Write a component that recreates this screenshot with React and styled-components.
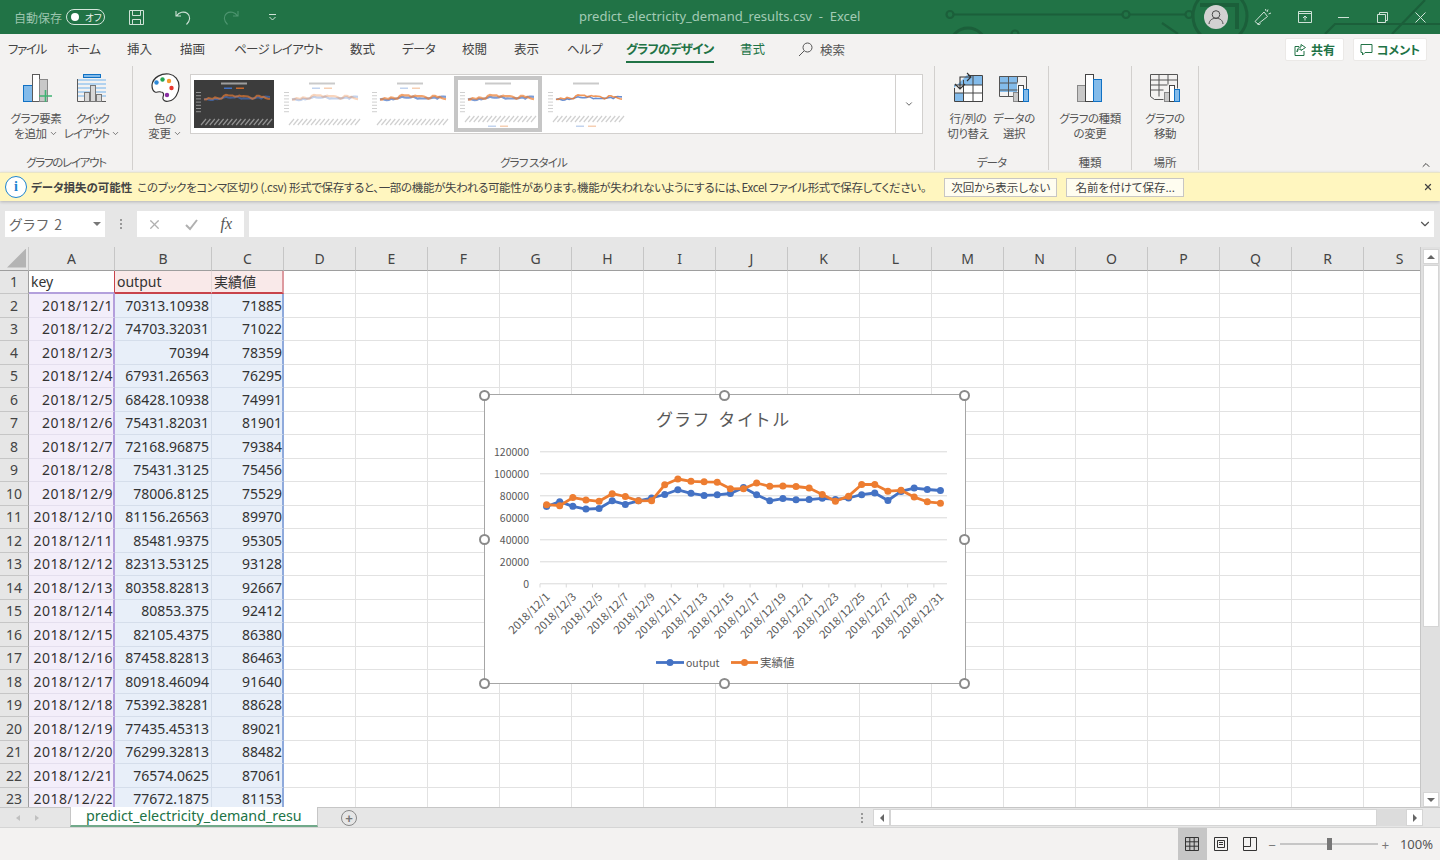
import React from 'react'
import styled, { createGlobalStyle, css } from 'styled-components'
import { ChevronDown, ChevronUp, X } from 'lucide-react'

const UI_FONT = '"Noto Sans CJK JP", "Noto Sans", sans-serif'
const CELL_FONT = '"Noto Sans", "Noto Sans CJK JP", sans-serif'

const rows = [
  ['2018/12/1', '70313.10938', '71885'],
  ['2018/12/2', '74703.32031', '71022'],
  ['2018/12/3', '70394', '78359'],
  ['2018/12/4', '67931.26563', '76295'],
  ['2018/12/5', '68428.10938', '74991'],
  ['2018/12/6', '75431.82031', '81901'],
  ['2018/12/7', '72168.96875', '79384'],
  ['2018/12/8', '75431.3125', '75456'],
  ['2018/12/9', '78006.8125', '75529'],
  ['2018/12/10', '81156.26563', '89970'],
  ['2018/12/11', '85481.9375', '95305'],
  ['2018/12/12', '82313.53125', '93128'],
  ['2018/12/13', '80358.82813', '92667'],
  ['2018/12/14', '80853.375', '92412'],
  ['2018/12/15', '82105.4375', '86380'],
  ['2018/12/16', '87458.82813', '86463'],
  ['2018/12/17', '80918.46094', '91640'],
  ['2018/12/18', '75392.38281', '88628'],
  ['2018/12/19', '77435.45313', '89021'],
  ['2018/12/20', '76299.32813', '88482'],
  ['2018/12/21', '76574.0625', '87061'],
  ['2018/12/22', '77672.1875', '81153'],
]

// the last days are below the fold, read off the chart
const outputSeries = [...rows.map((r) => Number(r[1])), 76700, 78000, 81000, 82500, 75700, 84000, 87000, 85700, 84800]
const actualSeries = [...rows.map((r) => Number(r[2])), 75000, 79700, 90300, 90300, 84200, 85000, 78800, 74500, 73300]

const columns = ['D', 'E', 'F', 'G', 'H', 'I', 'J', 'K', 'L', 'M', 'N', 'O', 'P', 'Q', 'R', 'S']

const tabs = [
  { label: 'ファイル', width: 59, squeeze: 1.3 },
  { label: 'ホーム', width: 60, squeeze: 1 },
  { label: '挿入', width: 53 },
  { label: '描画', width: 54 },
  { label: 'ページ レイアウト', width: 116, squeeze: 0.6 },
  { label: '数式', width: 52 },
  { label: 'データ', width: 60, squeeze: 0.6 },
  { label: '校閲', width: 52 },
  { label: '表示', width: 53 },
  { label: 'ヘルプ', width: 59 },
  { label: 'グラフのデザイン', width: 114, kind: 'active', squeeze: 0.75 },
  { label: '書式', width: 58, kind: 'context' },
]

const GlobalStyle = createGlobalStyle`
  html, body { margin: 0; padding: 0; overflow: hidden; background: #f3f2f1; }
  * { box-sizing: border-box; }
`

const Shell = styled.div`
  width: 1440px;
  height: 860px;
  display: flex;
  flex-direction: column;
  overflow: hidden;
  font-family: ${UI_FONT};
  font-feature-settings: "palt";
  color: #444;
`

/* title bar */
const TitleBar = styled.header`
  position: relative;
  height: 34px;
  flex: none;
  display: grid;
  grid-template-columns: 579px 1fr auto;
  align-items: center;
  background: #217346;
  color: #a3cbb5;
`
const Circuit = styled.svg`
  position: absolute;
  inset: 0;
  width: 1440px;
  height: 34px;
`
const QuickAccess = styled.div`
  position: relative;
  display: flex;
  align-items: center;
  padding-left: 14px;
`
const AutoSaveLabel = styled.span`
  font-size: 12px;
  color: #9cc5ae;
  width: 52px;
`
const Toggle = styled.span`
  width: 39px;
  height: 16px;
  border: 1px solid #d5e6dc;
  border-radius: 8px;
  display: flex;
  align-items: center;
  gap: 6px;
  padding-left: 4px;
  font-size: 9.5px;
  color: #eef5f1;
  &::before {
    content: "";
    width: 8px;
    height: 8px;
    border-radius: 50%;
    background: #fff;
  }
`
const QuickIcon = styled.span`
  display: flex;
  margin-left: ${(p) => p.$left}px;
`
const DocTitle = styled.div`
  position: relative;
  font-family: "Noto Sans", sans-serif;
  font-size: 13px;
  margin-top: -3px;
  color: #a3cbb5;
  white-space: pre;
`
const WindowTools = styled.div`
  position: relative;
  display: flex;
  align-items: center;
  padding-right: 14.5px;
`
const Avatar = styled.span`
  width: 24px;
  height: 24px;
  border-radius: 50%;
  background: #d2d2d2;
  display: flex;
  align-items: center;
  justify-content: center;
`
const WindowIcon = styled.span`
  display: flex;
  margin-left: ${(p) => p.$left}px;
`

/* tab row */
const TabRow = styled.nav`
  height: 30px;
  flex: none;
  display: flex;
  align-items: center;
  padding: 0 13px 0 8px;
  background: #f3f2f1;
`
const Tab = styled.span`
  flex: none;
  width: ${(p) => p.$width}px;
  margin-top: -1px;
  font-size: 12.5px;
  letter-spacing: ${(p) => -(p.$squeeze || 0)}px;
  color: #444;
  ${(p) =>
    p.$kind === 'context' &&
    css`
      color: #217346;
    `}
  ${(p) =>
    p.$kind === 'active' &&
    css`
      color: #217346;
      font-weight: 700;
      position: relative;
      &::after {
        content: "";
        position: absolute;
        left: 0;
        bottom: -5px;
        width: 88px;
        height: 2.5px;
        background: #217346;
      }
    `}
`
const SearchBox = styled.span`
  display: flex;
  align-items: center;
  gap: 7px;
  font-size: 12.5px;
  color: #555;
`
const TabActions = styled.div`
  margin-left: auto;
  display: flex;
  gap: 9px;
`
const ActionButton = styled.span`
  height: 23px;
  width: ${(p) => p.$width}px;
  background: #fff;
  border: 1px solid #ebe9e7;
  border-radius: 2px;
  display: flex;
  align-items: center;
  justify-content: center;
  gap: 4px;
  font-size: 12px;
  font-weight: 700;
  color: #217346;
`

/* ribbon */
const Ribbon = styled.section`
  height: 108px;
  flex: none;
  display: flex;
  background: #f3f2f1;
`
const Group = styled.div`
  width: ${(p) => p.$width}px;
  height: 104px;
  margin-top: 2px;
  flex: none;
  display: flex;
  flex-direction: column;
  border-right: 1px solid #d2d0ce;
`
const GroupBody = styled.div`
  height: 88px;
  display: flex;
  padding: 6px 0 0 ${(p) => p.$pad}px;
`
const GroupLabel = styled.div`
  text-align: center;
  font-size: 11.5px;
  line-height: 16px;
  margin-top: 2px;
  letter-spacing: ${(p) => -(p.$squeeze || 0)}px;
  color: #555;
`
const RibbonButton = styled.div`
  width: ${(p) => p.$width}px;
  flex: none;
  display: flex;
  flex-direction: column;
  align-items: center;
  font-size: 11.5px;
  line-height: 15px;
  letter-spacing: -0.4px;
  color: #555;
  text-align: center;
  white-space: nowrap;
  svg.ribbon-icon {
    display: block;
    margin-bottom: 6.5px;
  }
`
const Squeezed = styled.span`
  letter-spacing: ${(p) => -p.$by}px;
`
const Gallery = styled.div`
  width: 733px;
  height: 60px;
  margin-top: 2px;
  flex: none;
  display: flex;
  align-items: center;
  gap: 8px;
  padding-left: 3px;
  background: #fff;
  border: 1px solid #d2d0ce;
`
const Thumb = styled.svg`
  width: 80px;
  height: 48px;
  flex: none;
  filter: blur(0.5px);
  outline: ${(p) => (p.$selected ? '4px solid #c6c6c6' : 'none')};
`
const GalleryMore = styled.span`
  margin-left: auto;
  width: 27px;
  height: 100%;
  display: flex;
  align-items: center;
  justify-content: center;
  border-left: 1px solid #d2d0ce;
  color: #444;
`
const Collapse = styled.span`
  margin: auto 8px 1px auto;
  display: flex;
  color: #444;
`

/* message bar */
const MessageBar = styled.div`
  position: relative;
  z-index: 1;
  height: 29px;
  flex: none;
  display: flex;
  align-items: center;
  background: #fff6bf;
  border-top: 1px solid #e8e4c8;
  box-shadow: 0 1px 3px rgba(0, 0, 0, 0.22);
  padding: 0 7px 0 5px;
  font-size: 11.5px;
  color: #444;
  white-space: nowrap;
`
const InfoIcon = styled.span`
  width: 22px;
  height: 22px;
  flex: none;
  border: 1.5px solid #1d84d0;
  border-radius: 50%;
  background: #fff;
  color: #1d84d0;
  display: flex;
  align-items: center;
  justify-content: center;
  font: 700 14px "Liberation Serif", serif;
  margin-right: 4px;
`
const MessageTitle = styled.b`
  font-weight: 700;
  color: #444;
  margin-right: 5px;
`
const MessageText = styled.span`
  letter-spacing: -0.34px;
`
const MessageButton = styled.span`
  height: 19px;
  width: ${(p) => p.$width}px;
  margin-left: ${(p) => p.$left}px;
  flex: none;
  display: flex;
  align-items: center;
  justify-content: center;
  background: #fffdf0;
  border: 1px solid #c8c6c4;
  color: #444;
`
const MessageClose = styled.span`
  margin-left: auto;
  display: flex;
  color: #444;
`

/* formula bar */
const FormulaArea = styled.div`
  height: 46px;
  flex: none;
  display: flex;
  align-items: center;
  padding: 0 6px 0 5px;
  background: #e6e6e6;
`
const NameBox = styled.div`
  width: 100px;
  height: 26px;
  background: #fff;
  display: flex;
  align-items: center;
  justify-content: space-between;
  padding: 0 4px;
  font-size: 14px;
  color: #666;
  letter-spacing: 1.4px;
  &::after {
    content: "";
    border-left: 4px solid transparent;
    border-right: 4px solid transparent;
    border-top: 4px solid #777;
  }
`
const Grip = styled.div`
  width: 32px;
  display: flex;
  flex-direction: column;
  align-items: center;
  gap: 2px;
  i {
    width: 2px;
    height: 2px;
    background: #999;
  }
`
const FormulaButtons = styled.div`
  width: 107px;
  height: 26px;
  background: #fff;
  display: flex;
  align-items: center;
  justify-content: space-between;
  padding: 0 12px 0 10px;
  color: #b0b0b0;
`
const FxLabel = styled.span`
  font: italic 400 16px "Liberation Serif", serif;
  color: #555;
`
const FormulaInput = styled.div`
  flex: 1;
  height: 26px;
  margin-left: 5px;
  background: #fff;
  display: flex;
  align-items: center;
  justify-content: flex-end;
  padding-right: 2px;
  color: #555;
`

/* worksheet */
const Workspace = styled.div`
  height: 560px;
  flex: none;
  display: flex;
  background: #e6e6e6;
`
const SheetPane = styled.div`
  position: relative;
  width: 1421px;
  flex: none;
  overflow: hidden;
  background: #fff;
  border-right: 1px solid #c6c6c6;
`
const SheetGrid = styled.div`
  display: grid;
  grid-template-columns: 29px 86px 97px 72px repeat(16, 72px);
  grid-auto-rows: 23.5px;
  font-family: ${CELL_FONT};
`
const CornerCell = styled.div`
  background: #e6e6e6;
  border-right: 1px solid #c6c6c6;
  border-bottom: 1px solid #9e9e9e;
  position: relative;
  &::after {
    content: "";
    position: absolute;
    right: 2px;
    bottom: 2px;
    width: 19px;
    height: 19px;
    background: #b4b4b4;
    clip-path: polygon(100% 0, 100% 100%, 0 100%);
  }
`
const ColumnHead = styled.div`
  background: #e6e6e6;
  border-right: 1px solid #c6c6c6;
  border-bottom: 1px solid #9e9e9e;
  display: flex;
  align-items: center;
  justify-content: center;
  font-size: 14px;
  color: #444;
`
const RowHead = styled.div`
  background: #e6e6e6;
  border-right: 1px solid #9e9e9e;
  border-bottom: 1px solid #c6c6c6;
  display: flex;
  align-items: center;
  justify-content: center;
  font-size: 14px;
  color: #444;
`
const cellTones = {
  keyHead: css`
    border-right: 1px solid #c8434b;
    border-bottom: 2px solid #b3a0dc;
  `,
  outHead: css`
    background: #f9e9e9;
    border-bottom: 2px solid #c8434b;
    border-right: 1px solid #e6d8d8;
    justify-content: flex-start;
  `,
  valHead: css`
    background: #f9e9e9;
    border-bottom: 2px solid #c8434b;
    border-right: 2px solid #dd9a9f;
    justify-content: flex-start;
  `,
  key: css`
    background: #f3eefa;
    border-right: 2px solid #b49fdc;
    border-bottom: 1px solid #e4dfee;
    justify-content: flex-end;
    padding-right: 0;
    letter-spacing: 0.5px;
  `,
  output: css`
    background: #e8eff9;
    border-right: 1px solid #d5deeb;
    border-bottom: 1px solid #d5deeb;
    justify-content: flex-end;
  `,
  actual: css`
    background: #e8eff9;
    border-right: 2px solid #8faadc;
    border-bottom: 1px solid #d5deeb;
    justify-content: flex-end;
    padding-right: 0;
  `,
}
const Cell = styled.div`
  display: flex;
  align-items: center;
  padding: 0 2px;
  font-size: 14px;
  color: #333;
  white-space: nowrap;
  border-right: 1px solid #e2e2e2;
  border-bottom: 1px solid #e2e2e2;
  ${(p) => cellTones[p.$tone]}
`

/* chart lying on the sheet */
const ChartFrame = styled.div`
  position: absolute;
  left: 483.5px;
  top: 147px;
  width: 482px;
  height: 290px;
  background: #fff;
  border: 1.5px solid #a6a6a6;
`
const ChartDrawing = styled.svg`
  display: block;
  width: 479px;
  height: 287px;
  font-family: ${UI_FONT};
`
const Handle = styled.span`
  position: absolute;
  left: ${(p) => p.$x}%;
  top: ${(p) => p.$y}%;
  width: 11px;
  height: 11px;
  margin: -5.5px 0 0 -5.5px;
  border-radius: 50%;
  background: #fff;
  border: 2px solid #8a8a8a;
`

/* scrollbars */
const VerticalBar = styled.div`
  flex: 1;
  display: flex;
  flex-direction: column;
  padding: 2px 1px 0 2px;
  background: #e0e0e0;
`
const ScrollButton = styled.span`
  height: ${(p) => p.$size || 15}px;
  width: ${(p) => p.$wide || 'auto'};
  flex: none;
  background: #fff;
  border: 1px solid #d5d5d5;
  display: flex;
  align-items: center;
  justify-content: center;
  &::after {
    content: "";
    ${(p) =>
      p.$dir === 'up' &&
      css`
        border-left: 4px solid transparent;
        border-right: 4px solid transparent;
        border-bottom: 4px solid #666;
      `}
    ${(p) =>
      p.$dir === 'down' &&
      css`
        border-left: 4px solid transparent;
        border-right: 4px solid transparent;
        border-top: 4px solid #666;
      `}
    ${(p) =>
      p.$dir === 'left' &&
      css`
        border-top: 4px solid transparent;
        border-bottom: 4px solid transparent;
        border-right: 4px solid #666;
      `}
    ${(p) =>
      p.$dir === 'right' &&
      css`
        border-top: 4px solid transparent;
        border-bottom: 4px solid transparent;
        border-left: 4px solid #666;
      `}
  }
`
const VerticalThumb = styled.span`
  height: 362px;
  margin-top: 1px;
  background: #fff;
  border: 1px solid #d5d5d5;
  flex: none;
`
const BarSpacer = styled.span`
  flex: 1;
`

/* sheet tabs */
const SheetTabs = styled.div`
  height: 21px;
  flex: none;
  display: flex;
  background: #e6e6e6;
  border-top: 1px solid #c6c6c6;
  border-bottom: 1px solid #d5d5d5;
`
const TabNav = styled.div`
  width: 70px;
  flex: none;
  display: flex;
  align-items: center;
  gap: 15px;
  padding-left: 16px;
  i {
    border-top: 3.5px solid transparent;
    border-bottom: 3.5px solid transparent;
  }
  i:first-child {
    border-right: 4px solid #c0c0c0;
  }
  i:last-child {
    border-left: 4px solid #c0c0c0;
  }
`
const SheetTab = styled.div`
  width: 248px;
  height: 20px;
  flex: none;
  margin-top: -1px;
  padding: 0 0 1px 15px;
  display: flex;
  align-items: center;
  background: #fff;
  color: #217346;
  font-family: "Noto Sans", sans-serif;
  font-size: 14.3px;
  border-left: 1px solid #c6c6c6;
  border-right: 1px solid #c6c6c6;
  border-bottom: 2px solid #71a98a;
  white-space: nowrap;
  overflow: hidden;
`
const AddSheet = styled.span`
  width: 16px;
  height: 16px;
  flex: none;
  margin: 2px 0 0 23px;
  border: 1.5px solid #888;
  border-radius: 50%;
  display: flex;
  align-items: center;
  justify-content: center;
  color: #777;
  font: 700 13px/1 "Liberation Sans", sans-serif;
`
const SplitGrip = styled(Grip)`
  width: 10px;
  margin-left: 500px;
  justify-content: center;
`
const HorizontalBar = styled.div`
  margin-left: 6px;
  width: 550px;
  flex: none;
  display: flex;
  padding-top: 1px;
`
const HorizontalThumb = styled.span`
  width: 487px;
  height: 17px;
  flex: none;
  background: #fff;
  border: 1px solid #d5d5d5;
`
const HorizontalTrack = styled.span`
  width: 29px;
  height: 17px;
  flex: none;
  background: #dcdcdc;
`

/* status bar */
const StatusBar = styled.footer`
  flex: 1;
  display: flex;
  justify-content: flex-end;
  align-items: stretch;
  background: #f3f2f1;
  padding-right: 7px;
`
const ViewButton = styled.span`
  width: 29px;
  display: flex;
  align-items: center;
  justify-content: center;
  background: ${(p) => (p.$on ? '#c6c6c6' : 'transparent')};
`
const ZoomSlider = styled.div`
  display: flex;
  align-items: center;
  margin-left: 3.5px;
  color: #777;
  font-size: 13px;
`
const SliderTrack = styled.span`
  position: relative;
  width: 98px;
  height: 2px;
  margin: 0 4px;
  background: #c6c6c6;
  &::after {
    content: "";
    position: absolute;
    left: 47px;
    top: -5px;
    width: 5px;
    height: 12px;
    background: #777;
  }
`
const ZoomValue = styled.span`
  margin: auto 0 auto 11px;
  font-family: "Noto Sans", sans-serif;
  font-size: 13px;
  color: #555;
`

/* drawings */
const BLUE = '#83bbea'
const BLUE_LINE = '#1071c4'
const GRAY_LINE = '#5a5a5a'

function AddElementIcon() {
  return (
    <svg className="ribbon-icon" width="36" height="32" viewBox="0 0 36 32">
      <rect x="5.5" y="13.5" width="9" height="16" fill={BLUE} stroke={BLUE_LINE} />
      <rect x="14.5" y="2.5" width="7" height="27" fill="#fff" stroke={GRAY_LINE} />
      <rect x="21.5" y="7.5" width="8" height="22" fill="#c8c8c8" stroke="#888" />
      <path d="M27.5 18v12M21 24h13" stroke="#3fb373" strokeWidth="1.6" fill="none" />
    </svg>
  )
}

function QuickLayoutIcon() {
  return (
    <svg className="ribbon-icon" width="34" height="32" viewBox="0 0 34 32">
      <path d="M3 8h28M3 12h28M3 16h28M3 20h28M3 24h28" stroke="#9cc8ee" strokeWidth="1.6" />
      <rect x="8.5" y="2.5" width="17" height="3" fill={BLUE} stroke={BLUE_LINE} />
      <path d="M2.5 7v22.5H31" stroke={GRAY_LINE} fill="none" />
      <rect x="9.5" y="20.5" width="5" height="9" fill="#d8d8d8" stroke="#777" />
      <rect x="15.5" y="13.5" width="5" height="16" fill="#d8d8d8" stroke="#777" />
      <rect x="21.5" y="22.5" width="5" height="7" fill="#d8d8d8" stroke="#777" />
    </svg>
  )
}

function PaletteIcon() {
  return (
    <svg className="ribbon-icon" width="32" height="32" viewBox="0 0 32 32">
      <path
        d="M3 13C4 5 13 1 20 2c6 1 10 6 10 12 0 7-4 14-10 15-4 1-7-1-6-4 1-2 1-5-2-5-3-1-4 1-6 0-2-1-3-4-3-7z"
        fill="#fff"
        stroke="#333"
        strokeWidth="1.2"
      />
      <circle cx="7.5" cy="10.5" r="2.2" fill="#2d89d8" />
      <circle cx="13.5" cy="7.5" r="2.2" fill="#25a552" />
      <circle cx="20" cy="9" r="2.2" fill="#f59a2e" />
      <circle cx="22.5" cy="16" r="2.2" fill="#e8352e" />
      <circle cx="18" cy="23" r="2.2" fill="#8a2fa3" />
    </svg>
  )
}

function SwitchRowColIcon() {
  return (
    <svg className="ribbon-icon" width="32" height="32" viewBox="0 0 32 32">
      <path d="M2 29V16L15 3h15v10H2z" fill={BLUE} />
      <path d="M11.5 13h19v16h-19z" fill="#fff" />
      <path d="M2 21h9.5V29H2z" fill={BLUE} />
      <path d="M2.5 16v13.5h28V3.5H16M2.5 21h28M2.5 13h28M11.5 8v21.5M21 3.5v26" stroke="#444" fill="none" />
      <path d="M3 12l5 5 5-5M8 16V5h11M15 1l4 4-4 4" stroke="#333" fill="none" strokeWidth="1.1" />
    </svg>
  )
}

function SelectDataIcon() {
  return (
    <svg className="ribbon-icon" width="32" height="32" viewBox="0 0 32 32">
      <rect x="1" y="4" width="18" height="16" fill={BLUE} />
      <path d="M1.5 4.5h27v14M1.5 4.5v20h14M1.5 11h18M1.5 18h18M10.5 4.5v20M19.5 4.5v6" stroke="#555" fill="none" />
      <rect x="15.5" y="20.5" width="6" height="9" fill="#c8c8c8" stroke="#888" />
      <rect x="20.5" y="13.5" width="5" height="16" fill="#fff" stroke="#444" />
      <rect x="25.5" y="17.5" width="5" height="12" fill={BLUE} stroke={BLUE_LINE} />
    </svg>
  )
}

function ChartTypeIcon() {
  return (
    <svg className="ribbon-icon" width="28" height="32" viewBox="0 0 28 32">
      <rect x="1.5" y="13.5" width="8" height="16" fill="#c8c8c8" stroke="#888" />
      <rect x="9.5" y="2.5" width="8" height="27" fill="#fff" stroke="#444" />
      <rect x="17.5" y="7.5" width="8" height="22" fill={BLUE} stroke={BLUE_LINE} />
    </svg>
  )
}

function MoveChartIcon() {
  return (
    <svg className="ribbon-icon" width="32" height="32" viewBox="0 0 32 32">
      <path d="M1.5 2.5h27v14M1.5 2.5v22l4 3h9M1.5 8h27M1.5 13h17M1.5 18h13M10 2.5v22M19 2.5v10" stroke="#555" fill="none" />
      <rect x="15.5" y="20.5" width="5" height="9" fill="#c8c8c8" stroke="#888" />
      <rect x="20.5" y="13.5" width="5" height="16" fill="#fff" stroke="#444" />
      <rect x="25.5" y="17.5" width="5" height="12" fill={BLUE} stroke={BLUE_LINE} />
    </svg>
  )
}

function MiniChart({ variant, selected, legendLow }) {
  const dark = variant === 'dark'
  const widths = { dark: 2, pale: 2.2, bold: 2.2, plain: 1.6 }
  const opacities = { dark: 0.65, pale: 0.32, bold: 0.7, plain: 0.8 }
  const toPath = (series) =>
    series
      .map((v, i) => `${i === 0 ? 'M' : 'L'}${(10 + i * 2.2).toFixed(1)} ${(33 - v * 0.00019).toFixed(1)}`)
      .join(' ')
  const ink = dark ? '#a8a8a8' : '#c4c4c4'
  const legendY = legendLow ? 45.5 : 7.5
  return (
    <Thumb viewBox="0 0 80 48" $selected={selected}>
      <rect width="80" height="48" fill={dark ? '#3c3c3c' : '#fff'} />
      <rect x="27" y="2.5" width="26" height="2" fill={ink} opacity="0.9" />
      <rect x="30" y={legendY} width="8" height="1.5" fill={dark ? '#4472c4' : '#c2d3ee'} />
      <rect x="42" y={legendY} width="8" height="1.5" fill={dark ? '#c8692c' : '#f6cfb3'} />
      {[0, 1, 2, 3, 4, 5, 6].map((n) => (
        <rect key={n} x="2" y={12 + n * 3.2} width="5" height="1" fill={ink} opacity="0.8" />
      ))}
      <path d={toPath(outputSeries)} stroke="#4472c4" strokeWidth={widths[variant]} fill="none" opacity={opacities[variant]} />
      <path d={toPath(actualSeries)} stroke="#ed7d31" strokeWidth={widths[variant]} fill="none" opacity={opacities[variant]} />
      {outputSeries.map((_, i) =>
        i % 2 === 0 ? (
          <path key={i} d={`M${7 + i * 2.2} ${legendLow ? 42 : 45}l5-6`} stroke={ink} strokeWidth="1.2" opacity="0.8" />
        ) : null
      )}
    </Thumb>
  )
}

function seriesY(value) {
  return 584.3 - (value / 120000) * 132
}
function seriesX(index) {
  return 540 + (407 / 31) * (index + 0.5)
}

function Series({ values, color }) {
  const line = values.map((v, i) => `${seriesX(i).toFixed(1)},${seriesY(v).toFixed(1)}`).join(' ')
  return (
    <g>
      <polyline points={line} fill="none" stroke={color} strokeWidth="2.8" strokeLinejoin="round" />
      {values.map((v, i) => (
        <circle key={i} cx={seriesX(i)} cy={seriesY(v)} r="3.5" fill={color} />
      ))}
    </g>
  )
}

function ChartSvg() {
  const ticks = [0, 20000, 40000, 60000, 80000, 100000, 120000]
  return (
    <ChartDrawing viewBox="485 395.5 479 287">
      <text x="724.5" y="426" textAnchor="middle" fontSize="17" letterSpacing="3.7" fill="#595959">
        グラフ タイトル
      </text>
      {ticks.map((t) => (
        <g key={t}>
          <line x1="540" x2="947" y1={seriesY(t)} y2={seriesY(t)} stroke="#d9d9d9" strokeWidth="1" />
          <text x="529" y={seriesY(t) + 3.8} textAnchor="end" fontSize="10.5" fill="#595959">
            {t}
          </text>
        </g>
      ))}
      {Array.from({ length: 16 }).map((_, i) => {
        const x = 540 + (407 / 31) * 2 * i
        return <line key={i} x1={x} x2={x} y1="584.3" y2="588" stroke="#d9d9d9" />
      })}
      {Array.from({ length: 16 }).map((_, i) => {
        const x = seriesX(i * 2) + 4
        return (
          <text
            key={i}
            x={x}
            y="598"
            textAnchor="end"
            fontSize="11.3"
            fill="#595959"
            transform={`rotate(-45 ${x} 598)`}
          >
            {`2018/12/${i * 2 + 1}`}
          </text>
        )
      })}
      <Series values={outputSeries} color="#4472c4" />
      <Series values={actualSeries} color="#ed7d31" />
      <line x1="656" x2="684" y1="663" y2="663" stroke="#4472c4" strokeWidth="2.8" />
      <circle cx="670" cy="663" r="3.5" fill="#4472c4" />
      <text x="686" y="667" fontSize="10.5" fill="#595959">
        output
      </text>
      <line x1="731" x2="758" y1="663" y2="663" stroke="#ed7d31" strokeWidth="2.8" />
      <circle cx="744.5" cy="663" r="3.5" fill="#ed7d31" />
      <text x="760" y="667" fontSize="11.5" fill="#595959">
        実績値
      </text>
    </ChartDrawing>
  )
}

const handles = [
  [0, 0],
  [50, 0],
  [100, 0],
  [0, 50],
  [100, 50],
  [0, 100],
  [50, 100],
  [100, 100],
]

function BlankCells() {
  return columns.map((c) => <Cell key={c} />)
}

function Worksheet() {
  return (
    <SheetGrid>
      <CornerCell />
      {['A', 'B', 'C', ...columns].map((c) => (
        <ColumnHead key={c}>{c}</ColumnHead>
      ))}
      <RowHead>1</RowHead>
      <Cell $tone="keyHead">key</Cell>
      <Cell $tone="outHead">output</Cell>
      <Cell $tone="valHead">実績値</Cell>
      <BlankCells />
      {rows.map((r, i) => (
        <React.Fragment key={r[0]}>
          <RowHead>{i + 2}</RowHead>
          <Cell $tone="key">{r[0]}</Cell>
          <Cell $tone="output">{r[1]}</Cell>
          <Cell $tone="actual">{r[2]}</Cell>
          <BlankCells />
        </React.Fragment>
      ))}
    </SheetGrid>
  )
}

function App() {
  return (
    <Shell>
      <GlobalStyle />
      <TitleBar>
        <Circuit viewBox="0 0 1440 34" fill="none" stroke="#1b5f3a" strokeWidth="2.2">
          <path d="M954 14.5H1122M1130 14.5H1185" />
          <circle cx="950" cy="14.5" r="3.5" />
          <circle cx="1126" cy="14.5" r="3.5" />
          <circle cx="1189" cy="14.5" r="3.5" />
          <circle cx="1220" cy="16" r="27" strokeWidth="3" />
          <path d="M1200 5h37v24" strokeWidth="4" />
          <circle cx="968" cy="46" r="18" strokeWidth="3" />
          <circle cx="1015" cy="34" r="3.5" />
          <path d="M1162 23l16 11M1325 34l10-10H1440M1392 34l33-34" />
        </Circuit>
        <QuickAccess>
          <AutoSaveLabel>自動保存</AutoSaveLabel>
          <Toggle>オフ</Toggle>
          <QuickIcon $left={23}>
            <svg width="17" height="17" viewBox="0 0 17 17" fill="none" stroke="#cfe2d7" strokeWidth="1">
              <path d="M1.5 1.5h14v14h-14zM4.5 1.5v5h8v-5M4.5 15.5v-5h8v5" />
            </svg>
          </QuickIcon>
          <QuickIcon $left={30}>
            <svg width="17" height="17" viewBox="0 0 17 17" fill="none" stroke="#cfe2d7" strokeWidth="1.1">
              <path d="M1 2v5h5M1.5 7C4 3 9 2 12.5 4.5c3 2.5 3 7-1 11" />
            </svg>
          </QuickIcon>
          <QuickIcon $left={30}>
            <svg width="17" height="17" viewBox="0 0 17 17" fill="none" stroke="#4e9570" strokeWidth="1.1">
              <path d="M16 2v5h-5M15.5 7C13 3 8 2 4.5 4.5c-3 2.5-3 7 1 11" />
            </svg>
          </QuickIcon>
          <QuickIcon $left={29}>
            <svg width="9" height="9" viewBox="0 0 9 9" fill="none" stroke="#cfe2d7" strokeWidth="1">
              <path d="M1 1.5h7M1.5 4l3 3 3-3" />
            </svg>
          </QuickIcon>
        </QuickAccess>
        <DocTitle>predict_electricity_demand_results.csv  -  Excel</DocTitle>
        <WindowTools>
          <Avatar>
            <svg width="16" height="16" viewBox="0 0 16 16" fill="none" stroke="#4a4a4a" strokeWidth="1">
              <circle cx="8" cy="5.5" r="3.8" />
              <path d="M1 15c.5-4 3-5.7 7-5.7s6.5 1.7 7 5.7" />
            </svg>
          </Avatar>
          <WindowIcon $left={26}>
            <svg width="18" height="18" viewBox="0 0 18 18" fill="none" stroke="#cfe2d7" strokeWidth="1">
              <path d="M1 13.5L10 4l3.5 4.5L4 16zM3 15.5c1 1.5 3 1.5 3.5 0M14 1.5l-1 2.5M17 5l-2.5 1M11.5 1l.5 2" />
            </svg>
          </WindowIcon>
          <WindowIcon $left={26}>
            <svg width="14" height="12" viewBox="0 0 14 12" fill="none" stroke="#cfe2d7" strokeWidth="1">
              <path d="M.5 .5h13v11H.5zM.5 2.5h13M7 9.5V5M5 7l2-2 2 2" />
            </svg>
          </WindowIcon>
          <WindowIcon $left={25.5}>
            <svg width="11" height="11" viewBox="0 0 11 11" fill="none" stroke="#cfe2d7" strokeWidth="1">
              <path d="M0 5.5h11" />
            </svg>
          </WindowIcon>
          <WindowIcon $left={28}>
            <svg width="11" height="11" viewBox="0 0 11 11" fill="none" stroke="#cfe2d7" strokeWidth="1">
              <path d="M.5 2.5h8v8h-8zM2.5 2.5v-2h8v8h-2" />
            </svg>
          </WindowIcon>
          <WindowIcon $left={27}>
            <svg width="11" height="11" viewBox="0 0 11 11" fill="none" stroke="#cfe2d7" strokeWidth="1">
              <path d="M.5 .5l10 10M10.5 .5l-10 10" />
            </svg>
          </WindowIcon>
        </WindowTools>
      </TitleBar>

      <TabRow>
        {tabs.map((t) => (
          <Tab key={t.label} $width={t.width} $kind={t.kind} $squeeze={t.squeeze}>
            {t.label}
          </Tab>
        ))}
        <SearchBox>
          <svg width="15" height="15" viewBox="0 0 15 15" fill="none" stroke="#555" strokeWidth="1">
            <circle cx="9.5" cy="5.5" r="4.5" />
            <path d="M6 9l-5 5" />
          </svg>
          検索
        </SearchBox>
        <TabActions>
          <ActionButton $width={59}>
            <svg width="13" height="13" viewBox="0 0 13 13" fill="none" stroke="#217346" strokeWidth="1">
              <path d="M5 3.5H1v9h9V8M7 1.5l4.5 3-4.5 3V6c-2 0-3.5 1-4 3 0-3 1.5-5 4-5z" />
            </svg>
            共有
          </ActionButton>
          <ActionButton $width={74}>
            <svg width="13" height="13" viewBox="0 0 13 13" fill="none" stroke="#217346" strokeWidth="1">
              <path d="M1 1.5h11v8H5l-2.5 2.5V9.5H1z" />
            </svg>
            コメント
          </ActionButton>
        </TabActions>
      </TabRow>

      <Ribbon>
        <Group $width={133}>
          <GroupBody $pad={8}>
            <RibbonButton $width={56}>
              <AddElementIcon />
              <span>グラフ要素</span>
              <span>
                を追加 <ChevronDown size={9} />
              </span>
            </RibbonButton>
            <RibbonButton $width={56}>
              <QuickLayoutIcon />
              <Squeezed $by={2}>クイック</Squeezed>
              <span>
                <Squeezed $by={1}>レイアウト</Squeezed> <ChevronDown size={9} />
              </span>
            </RibbonButton>
          </GroupBody>
          <GroupLabel $squeeze={1.3}>グラフのレイアウト</GroupLabel>
        </Group>
        <Group $width={802}>
          <GroupBody $pad={7}>
            <RibbonButton $width={50}>
              <PaletteIcon />
              <span>色の</span>
              <span>
                変更 <ChevronDown size={9} />
              </span>
            </RibbonButton>
            <Gallery>
              <MiniChart variant="dark" />
              <MiniChart variant="pale" />
              <MiniChart variant="bold" />
              <MiniChart variant="bold" selected legendLow />
              <MiniChart variant="plain" legendLow />
              <GalleryMore>
                <ChevronDown size={10} strokeWidth={2} />
              </GalleryMore>
            </Gallery>
          </GroupBody>
          <GroupLabel $squeeze={0.9}>グラフ スタイル</GroupLabel>
        </Group>
        <Group $width={114}>
          <GroupBody $pad={10}>
            <RibbonButton $width={46}>
              <SwitchRowColIcon />
              <span>行/列の</span>
              <span>切り替え</span>
            </RibbonButton>
            <RibbonButton $width={46}>
              <SelectDataIcon />
              <span>データの</span>
              <span>選択</span>
            </RibbonButton>
          </GroupBody>
          <GroupLabel $squeeze={1}>データ</GroupLabel>
        </Group>
        <Group $width={83}>
          <GroupBody $pad={0}>
            <RibbonButton $width={82}>
              <ChartTypeIcon />
              <span>グラフの種類</span>
              <span>の変更</span>
            </RibbonButton>
          </GroupBody>
          <GroupLabel>種類</GroupLabel>
        </Group>
        <Group $width={67}>
          <GroupBody $pad={0}>
            <RibbonButton $width={66}>
              <MoveChartIcon />
              <span>グラフの</span>
              <span>移動</span>
            </RibbonButton>
          </GroupBody>
          <GroupLabel>場所</GroupLabel>
        </Group>
        <Collapse>
          <ChevronUp size={12} />
        </Collapse>
      </Ribbon>

      <MessageBar>
        <InfoIcon>i</InfoIcon>
        <MessageTitle>データ損失の可能性</MessageTitle>
        <MessageText>
          このブックをコンマ区切り (.csv) 形式で保存すると、一部の機能が失われる可能性があります。機能が失われないようにするには、Excel ファイル形式で保存してください。
        </MessageText>
        <MessageButton $width={113} $left={18}>次回から表示しない</MessageButton>
        <MessageButton $width={118} $left={9}>名前を付けて保存...</MessageButton>
        <MessageClose>
          <X size={10} strokeWidth={3} />
        </MessageClose>
      </MessageBar>

      <FormulaArea>
        <NameBox>グラフ 2</NameBox>
        <Grip>
          <i />
          <i />
          <i />
        </Grip>
        <FormulaButtons>
          <X size={15} />
          <svg width="15" height="15" viewBox="0 0 15 15" fill="none" stroke="#b0b0b0" strokeWidth="2">
            <path d="M2 8l4 4 7-9" />
          </svg>
          <FxLabel>fx</FxLabel>
        </FormulaButtons>
        <FormulaInput>
          <ChevronDown size={14} />
        </FormulaInput>
      </FormulaArea>

      <Workspace>
        <SheetPane>
          <Worksheet />
          <ChartFrame>
            <ChartSvg />
            {handles.map(([x, y]) => (
              <Handle key={`${x}-${y}`} $x={x} $y={y} />
            ))}
          </ChartFrame>
        </SheetPane>
        <VerticalBar>
          <ScrollButton $dir="up" />
          <VerticalThumb />
          <BarSpacer />
          <ScrollButton $dir="down" />
        </VerticalBar>
      </Workspace>

      <SheetTabs>
        <TabNav>
          <i />
          <i />
        </TabNav>
        <SheetTab>predict_electricity_demand_resu</SheetTab>
        <AddSheet>+</AddSheet>
        <SplitGrip>
          <i />
          <i />
          <i />
        </SplitGrip>
        <HorizontalBar>
          <ScrollButton $dir="left" $size={17} $wide="17px" />
          <HorizontalThumb />
          <HorizontalTrack />
          <ScrollButton $dir="right" $size={17} $wide="17px" />
        </HorizontalBar>
      </SheetTabs>

      <StatusBar>
        <ViewButton $on>
          <svg width="14" height="14" viewBox="0 0 14 14" fill="none" stroke="#333" strokeWidth="1">
            <path d="M.5 .5h13v13H.5zM.5 4.8h13M.5 9.2h13M4.8 .5v13M9.2 .5v13" />
          </svg>
        </ViewButton>
        <ViewButton>
          <svg width="14" height="14" viewBox="0 0 14 14" fill="none" stroke="#333" strokeWidth="1">
            <path d="M.5 .5h13v13H.5zM3.5 3.5h7v7h-7zM5 5.5h4M5 7.5h4" />
          </svg>
        </ViewButton>
        <ViewButton>
          <svg width="14" height="14" viewBox="0 0 14 14" fill="none" stroke="#333" strokeWidth="1">
            <path d="M.5 .5h13v13H.5zM.5 9.5h7v-9" />
          </svg>
        </ViewButton>
        <ZoomSlider>
          −
          <SliderTrack />
          +
        </ZoomSlider>
        <ZoomValue>100%</ZoomValue>
      </StatusBar>
    </Shell>
  )
}

export default App
